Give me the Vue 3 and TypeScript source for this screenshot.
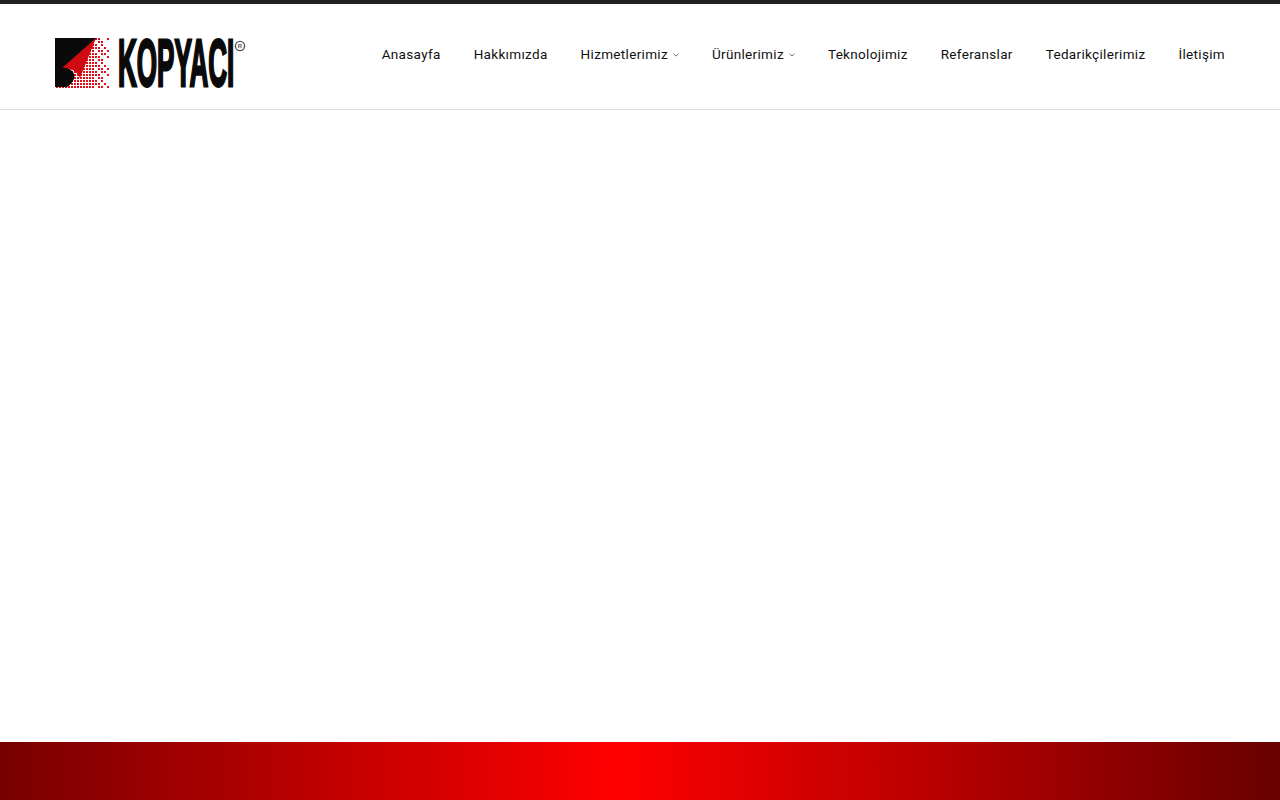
<template>
  <div class="page">
    <header class="site-header">
      <a class="logo" href="#" aria-label="Kopyacı">
        <svg width="191" height="52" viewBox="0 0 191 52">
          <rect
            v-for="(dot, index) in dots"
            :key="index"
            :x="dot.x"
            :y="dot.y"
            :width="dot.size"
            :height="dot.size"
            fill="#e0101a"
          />
          <path d="M0 1H42L8 31C4 33 2 35 1 36V50H0Z" fill="#0a0a0a" />
          <path d="M0 50V30H8C16 31 21 36 19 42C17 46 15 48 12 50Z" fill="#0a0a0a" />
          <path d="M41 1L7 31C14 30 22 34 25 41C30 28 36 14 41 1Z" fill="#cf0a12" />
          <text class="logo-word" transform="translate(63 49) scale(0.395 1)">KOPYACI</text>
          <circle cx="185" cy="9" r="4.6" fill="none" stroke="#555" stroke-width="1.4" />
          <text class="logo-mark" x="185" y="11.2" text-anchor="middle">R</text>
        </svg>
      </a>
      <nav class="main-nav">
        <a v-for="item in menu" :key="item.label" class="nav-link" href="#">
          {{ item.label }}
          <svg v-if="item.children" class="caret" width="6" height="4" viewBox="0 0 6 4">
            <path d="M0.6 0.8L3 3.1L5.4 0.8" fill="none" stroke="#444" stroke-width="0.8" />
          </svg>
        </a>
      </nav>
    </header>
    <main class="content"></main>
    <footer class="site-footer"></footer>
  </div>
</template>

<script setup lang="ts">
interface MenuItem {
  label: string;
  children?: boolean;
}

const menu: MenuItem[] = [
  { label: 'Anasayfa' },
  { label: 'Hakkımızda' },
  { label: 'Hizmetlerimiz', children: true },
  { label: 'Ürünlerimiz', children: true },
  { label: 'Teknolojimiz' },
  { label: 'Referanslar' },
  { label: 'Tedarikçilerimiz' },
  { label: 'İletişim' },
];

// Halftone of the logo: dots thin out towards the right edge
const dots: { x: number; y: number; size: number }[] = [];
for (let row = 0; row < 17; row++) {
  for (let col = 0; col < 18; col++) {
    const x = col * 3 + 1;
    const y = row * 3 + 1;
    const fade = (x - 28) / 26;
    if (fade > 0.35 && (row * 7 + col * 5) % 3 === 0) continue;
    if (fade > 0.7 && (row + col) % 2 === 0) continue;
    dots.push({ x, y, size: 2 });
  }
}
</script>

<style scoped>
.page {
  display: flex;
  flex-direction: column;
  min-height: 100vh;
  background: #fff;
}

.site-header {
  display: flex;
  align-items: center;
  justify-content: space-between;
  height: 105px;
  padding: 0 55px;
  border-top: 4px solid #222;
  border-bottom: 1px solid #ddd;
}

.logo {
  display: block;
  height: 52px;
  margin-top: 13px;
}

.logo svg {
  display: block;
}

.logo-word {
  font-family: "Liberation Sans Narrow", "Liberation Sans", sans-serif;
  font-size: 66px;
  font-weight: 700;
  fill: #0a0a0a;
  stroke: #0a0a0a;
  stroke-width: 2.2px;
  vector-effect: non-scaling-stroke;
}

.logo-mark {
  font-family: "Liberation Sans", sans-serif;
  font-size: 6px;
  font-weight: 700;
  fill: #555;
}

.main-nav {
  display: flex;
  gap: 33px;
  margin-bottom: 6px;
}

.nav-link {
  display: flex;
  align-items: center;
  gap: 5px;
  color: #111;
  font-family: Roboto, "Liberation Sans", sans-serif;
  font-size: 13.5px;
  letter-spacing: 0.325px;
  line-height: 20px;
  text-decoration: none;
}

.caret {
  margin-top: 2px;
}

.content {
  flex: 1;
}

.site-footer {
  height: 58px;
  background: linear-gradient(90deg, #780000 0%, #ff0000 48.5%, #680000 100%);
}
</style>
